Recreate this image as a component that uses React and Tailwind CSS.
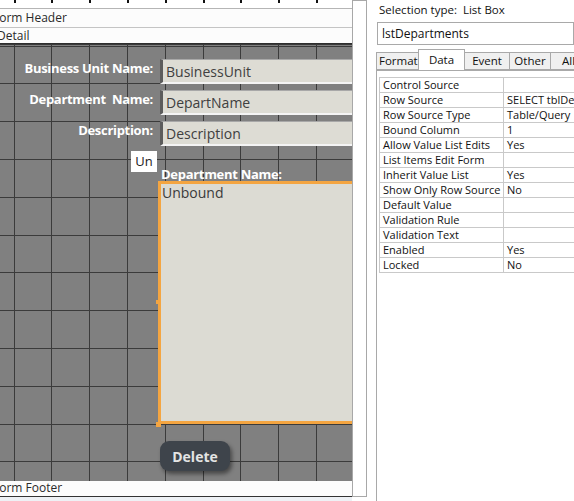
import React from "react";

const FONT = { fontFamily: '"Open Sans", "Noto Sans", Arial, sans-serif' };

const props = [
  ["Control Source", ""],
  ["Row Source", "SELECT tblDepartments.DepartName"],
  ["Row Source Type", "Table/Query"],
  ["Bound Column", "1"],
  ["Allow Value List Edits", "Yes"],
  ["List Items Edit Form", ""],
  ["Inherit Value List", "Yes"],
  ["Show Only Row Source", "No"],
  ["Default Value", ""],
  ["Validation Rule", ""],
  ["Validation Text", ""],
  ["Enabled", "Yes"],
  ["Locked", "No"],
];

function GridLines() {
  const xs = [];
  for (let i = 0; i < 10; i++) xs.push(13.5 + 37.8 * i);
  const ys = [];
  for (let i = 0; i < 12; i++) ys.push(1.5 + 37.8 * i);
  return (
    <svg className="absolute inset-0" width="352" height="437">
      <rect x="0" y="0" width="352" height="437" fill="#808080" />
      {xs.map((x) => (
        <line key={"x" + x} x1={Math.round(x) + 0.5} y1="0" x2={Math.round(x) + 0.5} y2="437" stroke="#3b3b3b" strokeWidth="1" />
      ))}
      {ys.map((y) => (
        <line key={"y" + y} x1="0" y1={Math.round(y) + 0.5} x2="352" y2={Math.round(y) + 0.5} stroke="#3b3b3b" strokeWidth="1" />
      ))}
      <line x1="0" y1="0.5" x2="352" y2="0.5" stroke="#3b3b3b" strokeWidth="1" />
    </svg>
  );
}

function Ruler() {
  const xs = [];
  for (let i = 0; i < 10; i++) xs.push(Math.round(13.5 + 37.8 * i));
  return (
    <svg width="352" height="9" className="block">
      <rect width="352" height="9" fill="#ffffff" />
      {xs.map((x) => (
        <rect key={x} x={x} y="0" width="2" height="3" fill="#111" />
      ))}
      <line x1="0" y1="8.5" x2="352" y2="8.5" stroke="#b5b5b5" />
    </svg>
  );
}

function TextBox({ top, text }) {
  return (
    <div
      className="absolute left-[160px] w-[200px] h-[25px] bg-[#dddcd4] border-l-[3px] border-t border-l-[#5c5c5c] border-t-[#a8a8a8] border-b-2 border-b-[#f4f4f4] flex items-center pl-[3px] text-[14px] text-[#404040]"
      style={{ top }}
    >
      {text}
    </div>
  );
}

function Label({ top, text }) {
  return (
    <div
      className="absolute right-[199px] h-[24px] flex items-center text-[13px] font-bold text-white whitespace-pre tracking-[-0.3px]"
      style={{ top }}
    >
      {text}
    </div>
  );
}

export default function App() {
  return (
    <div className="w-[574px] h-[501px] overflow-hidden bg-white flex" style={FONT}>
      {/* Left design surface */}
      <div className="w-[352px] flex flex-col shrink-0 overflow-hidden">
        <Ruler />
        <div className="h-[19px] bg-[#fcfcfc] border-b border-[#c4c4c4] flex items-center text-[12px] text-[#2a2a2a] overflow-hidden">
          <span className="-ml-[7px]">Form Header</span>
        </div>
        <div className="h-[15px] bg-[#fcfcfc] flex items-center text-[12px] text-[#2a2a2a] overflow-hidden">
          <span className="-ml-[3px]">Detail</span>
        </div>
        <div className="relative h-[437px] border-t border-[#2e2e2e]">
          <GridLines />
          <Label top={13} text="Business Unit Name:" />
          <TextBox top={15} text="BusinessUnit" />
          <Label top={44} text="Department  Name:" />
          <TextBox top={46} text="DepartName" />
          <Label top={75} text="Description:" />
          <TextBox top={77} text="Description" />

          <div className="absolute left-[131px] top-[107px] w-[26px] h-[21px] bg-white flex items-center justify-center text-[13px] text-[#222]">
            Un
          </div>

          <div className="absolute left-[161px] top-[121px] text-[13px] font-bold text-white tracking-[-0.3px]">
            Department Name:
          </div>

          <div className="absolute left-[158px] top-[137px] w-[200px] h-[243px] bg-[#dcdbd3] border-[3px] border-[#f4a541] pl-[1px] text-[14px] text-[#3a3a3a] leading-[18px]">
            Unbound
          </div>
          <div className="absolute left-[156px] top-[256px] w-[4px] h-[4px] bg-[#f4a541]" />
          <div className="absolute left-[156px] top-[378px] w-[5px] h-[5px] bg-[#f4a541]" />

          <div className="absolute left-[160px] top-[397px] w-[70px] h-[30px] rounded-[9px] bg-[#3e444b] shadow-[2px_3px_4px_rgba(0,0,0,0.45)] flex items-center justify-center text-[14px] font-bold text-[#e4e4e4]">
            Delete
          </div>
        </div>
        <div className="h-[16px] bg-[#fcfcfc] flex items-center text-[12px] text-[#2a2a2a] overflow-hidden">
          <span className="-ml-[7px]">Form Footer</span>
        </div>
        <div className="h-[1px] bg-[#333]" />
        <div className="flex-1 bg-[#eef1f5]" />
      </div>

      {/* Scrollbar */}
      <div className="w-[15px] shrink-0 flex flex-col">
        <div className="flex-1 border border-[#a8a8a8] bg-white" />
        <div className="h-[4px]" />
      </div>

      <div className="w-[9px] shrink-0 bg-white" />

      {/* Property sheet */}
      <div className="flex-1 flex flex-col bg-white text-[11px] text-[#111] min-w-0 overflow-hidden">
        <div className="h-[3px]" />
        <div className="h-[14px] flex items-center pl-[3px] whitespace-pre text-[11.5px]">Selection type:  List Box</div>
        <div className="mt-[5px] ml-[1px] h-[23px] border border-[#a9a9a9] flex items-center pl-[4px] text-[12px]">lstDepartments</div>
        <div className="mt-[4px] flex items-end h-[21px] relative text-[11.5px]">
          <div className="shrink-0 h-[18px] w-[43px] border border-[#a9a9a9] bg-[#f0f0f0] flex items-center pl-[2px]">Format</div>
          <div className="shrink-0 h-[21px] w-[47px] border border-b-0 border-[#a9a9a9] bg-white flex items-center justify-center -ml-[1px] relative z-10">Data</div>
          <div className="shrink-0 h-[18px] w-[46px] border border-[#a9a9a9] bg-[#f0f0f0] flex items-center justify-center -ml-[1px]">Event</div>
          <div className="shrink-0 h-[18px] w-[42px] border border-[#a9a9a9] bg-[#f0f0f0] flex items-center justify-center -ml-[1px]">Other</div>
          <div className="shrink-0 h-[18px] w-[40px] border border-[#a9a9a9] bg-[#f0f0f0] flex items-center pl-[11px] -ml-[1px]">All</div>
        </div>
        <div className="flex-1 border-l border-t border-[#a9a9a9] pl-[2px] pt-[6px]">
          <div className="border-t border-l border-[#c9c9c9]">
            {props.map(([k, v]) => (
              <div key={k} className="h-[15px] flex border-b border-[#c9c9c9]">
                <div className="w-[124px] shrink-0 border-r border-[#c9c9c9] pl-[3px] leading-[14px] whitespace-nowrap overflow-hidden">{k}</div>
                <div className="flex-1 pl-[3px] leading-[14px] whitespace-nowrap overflow-hidden">{v}</div>
              </div>
            ))}
          </div>
        </div>
      </div>
    </div>
  );
}
